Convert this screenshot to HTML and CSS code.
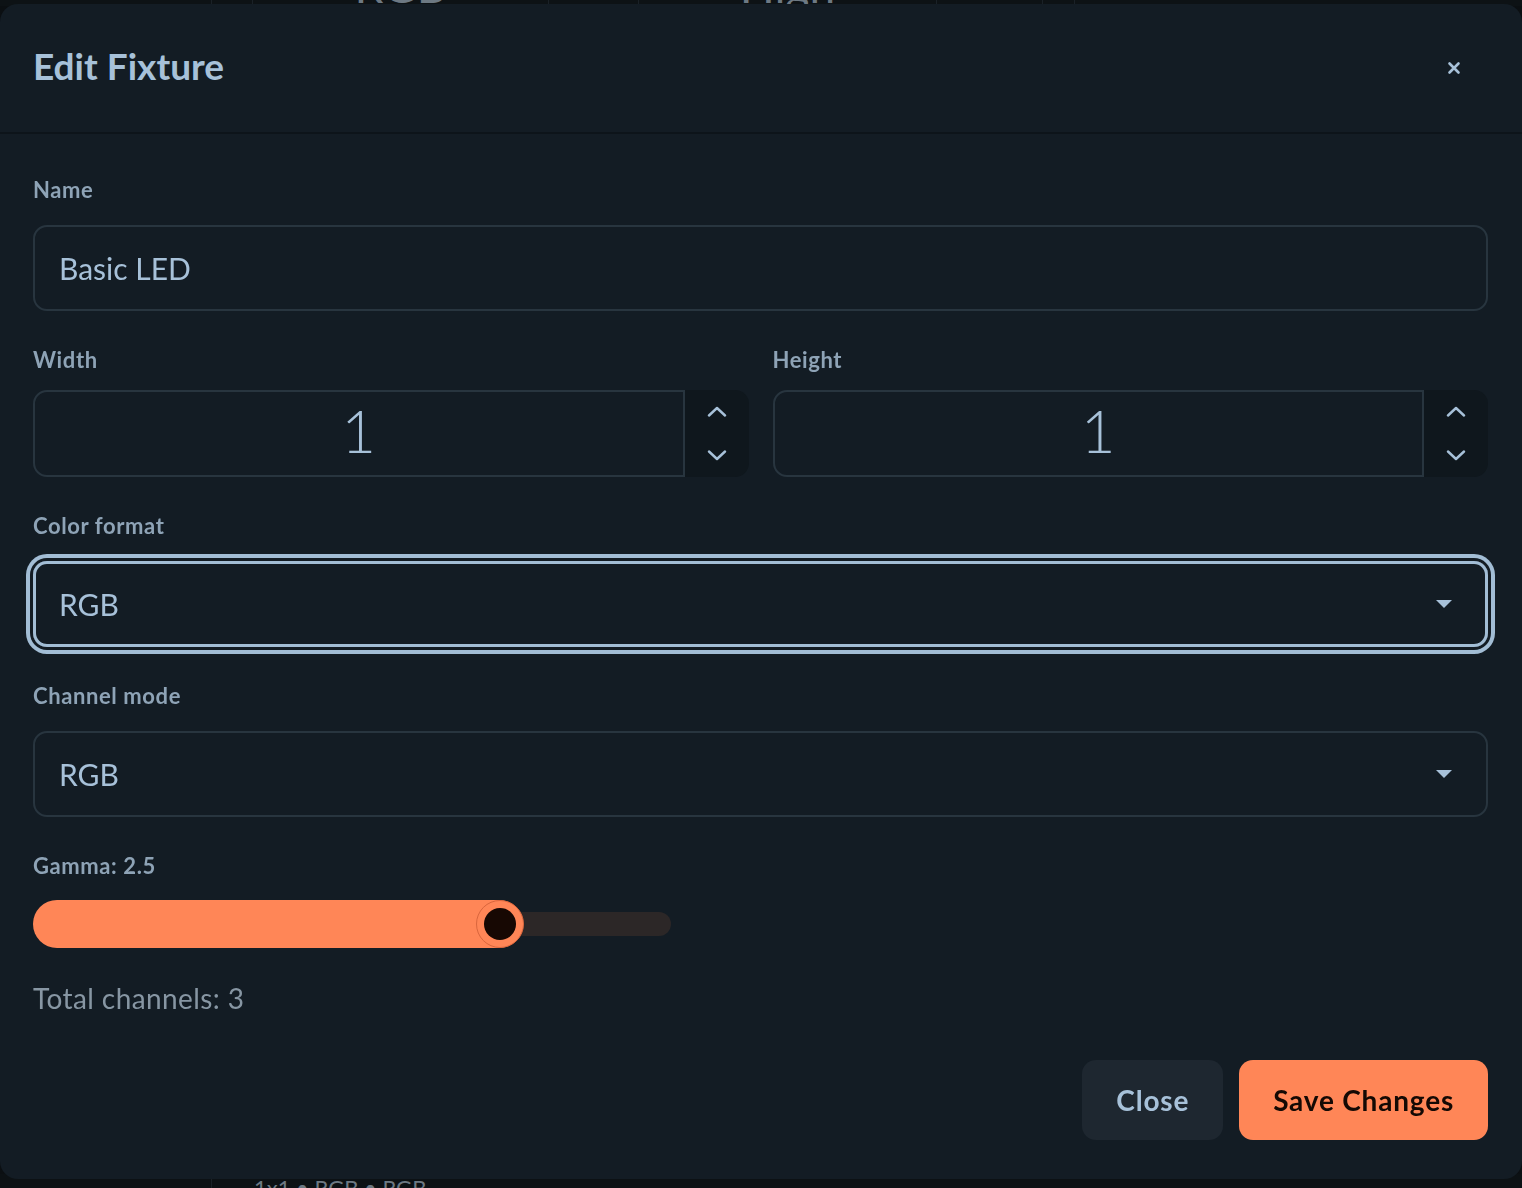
FILE: index.html
```html
<!DOCTYPE html>
<html lang="en">
<head>
    <meta charset="UTF-8">
    <meta name="viewport" content="width=device-width, initial-scale=1.0">
    <title>Edit Fixture</title>
    <link rel="stylesheet" href="styles.css">
</head>
<body>
    <!-- page underneath the modal -->
    <div class="page">
        <div class="page-row page-top">
            <div class="cell" style="width: 212px"></div>
            <div class="cell" style="width: 41px"></div>
            <div class="cell big" style="width: 296px">RGB</div>
            <div class="cell" style="width: 90px"></div>
            <div class="cell big" style="width: 298px">High</div>
            <div class="cell" style="width: 106px"></div>
            <div class="cell" style="width: 32px"></div>
            <div class="cell"></div>
        </div>
        <div class="page-row page-bottom">
            <div class="cell" style="width: 212px"></div>
            <div class="cell meta">1x1 &bull; RGB &bull; RGB</div>
        </div>
    </div>

    <div class="modal">
        <div class="modal-header">
            <h2>Edit Fixture</h2>
            <button class="close-x" aria-label="Close">
                <svg width="14" height="14" viewBox="0 0 14 14">
                    <path d="M2.5 2.5 L11.5 11.5 M11.5 2.5 L2.5 11.5" stroke="#a7c1d9" stroke-width="2.6" stroke-linecap="round"/>
                </svg>
            </button>
        </div>

        <div class="modal-body">
            <div class="field">
                <label>Name</label>
                <div class="text-input">Basic LED</div>
            </div>

            <div class="field-row">
                <div class="field">
                    <label class="tight">Width</label>
                    <div class="number-input">
                        <div class="number-value">1</div>
                        <div class="stepper">
                            <span><svg width="20" height="11" viewBox="0 0 20 11"><path d="M2 9.5 L10 2 L18 9.5" fill="none" stroke="#a7c1d9" stroke-width="2.4" stroke-linecap="round" stroke-linejoin="round"/></svg></span>
                            <span><svg width="20" height="11" viewBox="0 0 20 11"><path d="M2 1.5 L10 9 L18 1.5" fill="none" stroke="#a7c1d9" stroke-width="2.4" stroke-linecap="round" stroke-linejoin="round"/></svg></span>
                        </div>
                    </div>
                </div>
                <div class="field">
                    <label class="tight">Height</label>
                    <div class="number-input">
                        <div class="number-value">1</div>
                        <div class="stepper">
                            <span><svg width="20" height="11" viewBox="0 0 20 11"><path d="M2 9.5 L10 2 L18 9.5" fill="none" stroke="#a7c1d9" stroke-width="2.4" stroke-linecap="round" stroke-linejoin="round"/></svg></span>
                            <span><svg width="20" height="11" viewBox="0 0 20 11"><path d="M2 1.5 L10 9 L18 1.5" fill="none" stroke="#a7c1d9" stroke-width="2.4" stroke-linecap="round" stroke-linejoin="round"/></svg></span>
                        </div>
                    </div>
                </div>
            </div>

            <div class="field">
                <label>Color format</label>
                <div class="select focused">
                    <span>RGB</span>
                    <span class="caret"></span>
                </div>
            </div>

            <div class="field">
                <label>Channel mode</label>
                <div class="select">
                    <span>RGB</span>
                    <span class="caret"></span>
                </div>
            </div>

            <div class="field">
                <label class="slider-label">Gamma: 2.5</label>
                <div class="slider">
                    <div class="slider-track"></div>
                    <div class="slider-fill" style="width: 490px"></div>
                    <div class="slider-thumb" style="left: 443px"><span></span></div>
                </div>
            </div>

            <div class="total">Total channels: 3</div>
        </div>

        <div class="modal-footer">
            <button class="btn btn-ghost">Close</button>
            <button class="btn btn-primary">Save Changes</button>
        </div>
    </div>
</body>
</html>
```

FILE: styles.css
```css
* {
    box-sizing: border-box;
}

body {
    margin: 0;
    padding: 0;
    height: 100vh;
    overflow: hidden;
    background-color: #0b0f12;
    font-family: Lato, "Open Sans", sans-serif;
    color: #a7c1d9;
}

/* page behind the modal */
.page {
    height: 100vh;
    display: flex;
    flex-direction: column;
    justify-content: space-between;
}

.page-row {
    display: flex;
}

.page-top {
    height: 40px;
    margin-top: -34px;
    background-color: #0d1215;
}

.page-bottom {
    height: 40px;
    margin-bottom: -26px;
    background-color: #0c1114;
}

.cell {
    border-right: 1px solid #1a2127;
    color: #6d7983;
    overflow: hidden;
}

.cell:last-child {
    flex: 1;
    border-right: none;
}

.big {
    font-size: 46px;
    line-height: 40px;
    text-align: center;
}

.meta {
    padding-left: 42px;
    font-size: 22px;
    line-height: 28px;
    flex: 1;
}

/* modal */
.modal {
    position: fixed;
    top: 4px;
    left: 0;
    right: 0;
    bottom: 9px;
    background-color: #131c24;
    border-radius: 18px;
    display: flex;
    flex-direction: column;
}

.modal-header {
    height: 130px;
    padding: 0 52px 6px 33px;
    display: flex;
    align-items: center;
    justify-content: space-between;
    border-bottom: 2px solid #0d141a;
}

.modal-header h2 {
    margin: 0;
    font-size: 37px;
    font-weight: 700;
    color: #a7c1d9;
}

.close-x {
    width: 32px;
    height: 32px;
    border: none;
    background: none;
    padding: 0;
    margin-top: 6px;
    display: flex;
    align-items: center;
    justify-content: center;
}

.modal-body {
    padding: 43px 34px 0 33px;
}

.field {
    margin-bottom: 36px;
}

.field label {
    display: block;
    font-size: 22px;
    line-height: 26px;
    font-weight: 700;
    letter-spacing: 0.6px;
    color: #8ea3b6;
    margin-bottom: 22px;
}

.field label.tight {
    margin-bottom: 17px;
}

.field label.slider-label {
    margin-bottom: 21px;
}

.text-input,
.select {
    height: 86px;
    border: 2px solid #28353f;
    border-radius: 14px;
    padding: 0 24px;
    display: flex;
    align-items: center;
    font-size: 30px;
    color: #a7c1d9;
}

.field-row {
    display: flex;
    gap: 24px;
}

.field-row .field {
    flex: 1;
}

.number-input {
    height: 87px;
    display: flex;
}

.number-value {
    flex: 1;
    border: 2px solid #28353f;
    border-radius: 14px 0 0 14px;
    display: flex;
    align-items: center;
    justify-content: center;
    padding-bottom: 8px;
    font-size: 60px;
    font-weight: 300;
    color: #a7c1d9;
}

.stepper {
    width: 64px;
    background-color: #0f171d;
    border-radius: 0 14px 14px 0;
    display: flex;
    flex-direction: column;
}

.stepper span {
    flex: 1;
    display: flex;
    align-items: center;
    justify-content: center;
}

.select {
    justify-content: space-between;
    padding-right: 34px;
}

.select.focused {
    border: 3px solid #a2bdd5;
    padding-left: 23px;
    padding-right: 33px;
    box-shadow: 0 0 0 3px #131c24, 0 0 0 7px #a2bdd5;
}

.caret {
    width: 0;
    height: 0;
    border-left: 8px solid transparent;
    border-right: 8px solid transparent;
    border-top: 8px solid #a7c1d9;
}

/* gamma slider */
.slider {
    position: relative;
    width: 638px;
    height: 48px;
    display: flex;
    align-items: center;
}

.slider-track {
    width: 100%;
    height: 24px;
    border-radius: 12px;
    background-color: #2c2727;
}

.slider-fill {
    position: absolute;
    left: 0;
    top: 0;
    height: 48px;
    border-radius: 24px;
    background-color: #ff8657;
}

.slider-thumb {
    position: absolute;
    top: 0;
    width: 48px;
    height: 48px;
    border-radius: 50%;
    background-color: #ff8657;
    border: 1px solid #d9663d;
    display: flex;
    align-items: center;
    justify-content: center;
}

.slider-thumb span {
    width: 32px;
    height: 32px;
    border-radius: 50%;
    background-color: #170803;
}

.total {
    margin-top: -4px;
    font-size: 28px;
    line-height: 36px;
    letter-spacing: 0.4px;
    color: #8796a3;
}

.modal-footer {
    margin-top: auto;
    padding: 0 34px 39px 0;
    display: flex;
    justify-content: flex-end;
    gap: 16px;
}

.btn {
    height: 80px;
    border: none;
    border-radius: 14px;
    font-family: Lato, "Open Sans", sans-serif;
    font-size: 28px;
    font-weight: 700;
    letter-spacing: 0.8px;
    padding: 0 34px;
    cursor: pointer;
}

.btn-ghost {
    background-color: #1e2730;
    color: #a7c1d9;
}

.btn-primary {
    background-color: #ff8657;
    color: #140904;
}
```
